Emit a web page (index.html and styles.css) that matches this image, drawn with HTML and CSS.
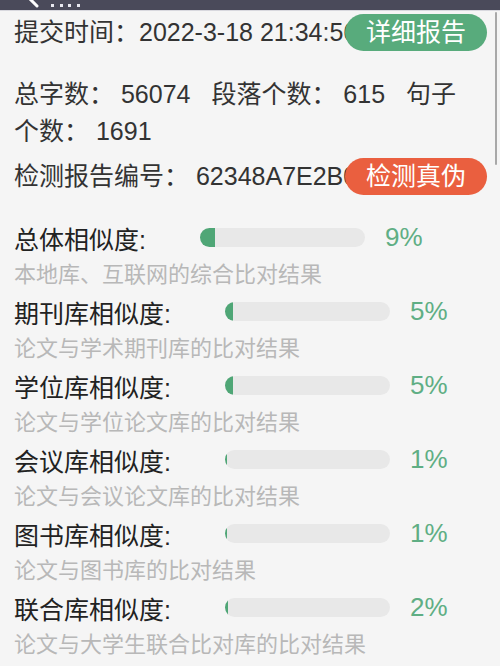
FILE: index.html
```html
<!doctype html>
<html>
<head>
<meta charset="utf-8">
<title>检测报告</title>
<link rel="stylesheet" href="styles.css">
</head>
<body>
<div class="topbar">
    <svg class="topbar-icons" width="100" height="11" viewBox="0 0 100 11">
        <path d="M28 -3 L37 6" stroke="#fff" stroke-width="3" stroke-linecap="round" fill="none"/>
        <rect x="51" y="4" width="3" height="3" fill="#e8e8f0"/>
        <rect x="60" y="4" width="3" height="3" fill="#e8e8f0"/>
        <rect x="68" y="4" width="3" height="3" fill="#e8e8f0"/>
        <rect x="77" y="4" width="3" height="3" fill="#e8e8f0"/>
    </svg>
</div>
<div class="scrollbar"></div>

<div class="page">
    <div class="info first">
        提交时间：2022-3-18 21:34:56
        <a class="btn btn-green">详细报告</a>
    </div>
    <div class="info stats">
        <span class="stat">总字数： 56074</span>
        <span class="stat">段落个数： 615</span>
        <span class="stat">句子个数： 1691</span>
    </div>
    <div class="info">
        检测报告编号： 62348A7E2B0C4
        <a class="btn btn-red">检测真伪</a>
    </div>

    <div class="results">
        <div class="row">
            <span class="label">总体相似度:</span>
            <span class="bar"><span class="fill" style="width:9%"></span></span>
            <span class="pct">9%</span>
        </div>
        <div class="desc">本地库、互联网的综合比对结果</div>

        <div class="row">
            <span class="label">期刊库相似度:</span>
            <span class="bar"><span class="fill" style="width:5%"></span></span>
            <span class="pct">5%</span>
        </div>
        <div class="desc">论文与学术期刊库的比对结果</div>

        <div class="row">
            <span class="label">学位库相似度:</span>
            <span class="bar"><span class="fill" style="width:5%"></span></span>
            <span class="pct">5%</span>
        </div>
        <div class="desc">论文与学位论文库的比对结果</div>

        <div class="row">
            <span class="label">会议库相似度:</span>
            <span class="bar"><span class="fill" style="width:1%"></span></span>
            <span class="pct">1%</span>
        </div>
        <div class="desc">论文与会议论文库的比对结果</div>

        <div class="row">
            <span class="label">图书库相似度:</span>
            <span class="bar"><span class="fill" style="width:1%"></span></span>
            <span class="pct">1%</span>
        </div>
        <div class="desc">论文与图书库的比对结果</div>

        <div class="row">
            <span class="label">联合库相似度:</span>
            <span class="bar"><span class="fill" style="width:2%"></span></span>
            <span class="pct">2%</span>
        </div>
        <div class="desc">论文与大学生联合比对库的比对结果</div>
    </div>
</div>
</body>
</html>
```

FILE: styles.css
```css
html, body{
    margin: 0;
    padding: 0;
    background-color: #f5f5f5;
}
body{
    font-family: "Liberation Sans", "Noto Sans CJK SC", sans-serif;
    color: #333;
    overflow: hidden;
    height: 666px;
}

.topbar{
    height: 10px;
    background-color: #4a4a5a;
    border-bottom: 1px solid #d8d8de;
    overflow: hidden;
}
.topbar-icons{
    display: block;
}

.scrollbar{
    position: absolute;
    top: 12px;
    right: 3px;
    width: 2px;
    height: 153px;
    background-color: #a8a8a8;
    border-radius: 1px;
}

.page{
    padding: 0 20px 0 14px;
}

.info{
    position: relative;
    font-size: 25px;
    line-height: 37px;
    white-space: nowrap;
    overflow: visible;
}
.info.first{
    margin-top: 3px;
}
.info.stats{
    white-space: normal;
    margin-top: 25px;
    margin-bottom: 8px;
}
.stat{
    margin-right: 14px;
}

.btn{
    position: absolute;
    right: -7px;
    top: 0;
    width: 142px;
    height: 37px;
    border-radius: 19px;
    color: #fff;
    text-align: center;
    font-size: 25px;
    line-height: 37px;
}
.btn-green{
    background-color: #58ab7c;
}
.btn-red{
    background-color: #ea5f3f;
}

.results{
    margin-top: 24px;
}
.row{
    display: flex;
    align-items: center;
    height: 37px;
    font-size: 25px;
}
.label{
    color: #222;
    width: auto;
}
.bar{
    display: block;
    margin-left: 54px;
    width: 165px;
    height: 19px;
    border-radius: 10px;
    background-color: #e8e8e8;
    overflow: hidden;
}
.fill{
    display: block;
    height: 100%;
    background-color: #4fa676;
}
.pct{
    margin-left: 20px;
    font-size: 26px;
    color: #5fae84;
}
.desc{
    height: 37px;
    line-height: 37px;
    font-size: 22px;
    color: #b8b8b8;
}
```
